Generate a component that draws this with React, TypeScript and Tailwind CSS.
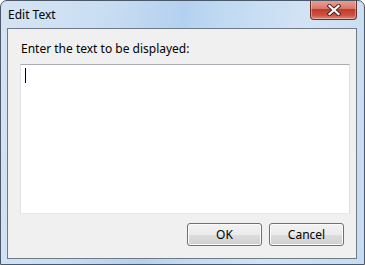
import React from "react";

// boîte de dialogue style Windows 7 (Aero)
function CloseButton() {
  return (
    <div className="mt-[-1px] mr-[7px] flex h-[20px] w-[47px] items-center justify-center rounded-b-[4px] border border-t-0 border-[#6b2d28] bg-[linear-gradient(to_bottom,#eba395_0%,#d9786a_45%,#c23a28_50%,#cc5140_80%,#e08a78_100%)] shadow-[inset_0_0_0_1px_rgba(255,255,255,0.35)]">
      <svg width="14" height="12" viewBox="0 0 14 12">
        <path d="M2.5 2 L11.5 10 M11.5 2 L2.5 10" stroke="#4a1f1a" strokeWidth="4" strokeLinecap="square" />
        <path d="M2.5 2 L11.5 10 M11.5 2 L2.5 10" stroke="#ffffff" strokeWidth="2.2" strokeLinecap="square" />
      </svg>
    </div>
  );
}

function Btn({ label }: { label: string }) {
  return (
    <button className="flex h-[23px] w-[75px] items-center justify-center rounded-[3px] border border-[#707070] bg-[linear-gradient(to_bottom,#f2f2f2_0%,#ebebeb_50%,#dddddd_51%,#cfcfcf_100%)] text-[12px] text-black shadow-[inset_0_0_0_1px_#fcfcfc]">
      {label}
    </button>
  );
}

export default function App() {
  return (
    <div
      className="relative flex h-[265px] w-[365px] flex-col overflow-hidden rounded-t-[7px] border border-[#4b5868] bg-[linear-gradient(100deg,#d5e4f3_0%,#cadef2_25%,#b3d1ef_45%,#c0daf2_55%,#d2e3f4_75%,#c6dcf2_100%)]"
      style={{ fontFamily: '"Noto Sans", "Open Sans", sans-serif' }}
    >
      {/* barre de titre */}
      <div className="flex h-[27px] shrink-0 items-start justify-between">
        <span className="pl-[7px] pt-[6px] text-[12px] leading-[16px] text-black">Edit Text</span>
        <CloseButton />
      </div>

      {/* zone client */}
      <div className="ml-[6px] mr-[7px] flex h-[231px] w-[350px] flex-col border border-[#707a86] bg-[#f0f0f0]">
        <div className="ml-[13px] mt-[12px] text-[12px] leading-[16px] text-black">
          Enter the text to be displayed:
        </div>
        <div className="ml-[12px] mt-[7px] h-[150px] w-[330px] border border-[#abadb3] border-b-[#e3e9ef] border-l-[#e2e3ea] border-r-[#dbdfe6] bg-white pl-[4px] pt-[3px]">
          <div className="h-[15px] w-[1px] bg-black" />
        </div>
        <div className="mt-[9px] flex justify-end gap-[7px] pr-[12px]">
          <Btn label="OK" />
          <Btn label="Cancel" />
        </div>
      </div>
    </div>
  );
}
